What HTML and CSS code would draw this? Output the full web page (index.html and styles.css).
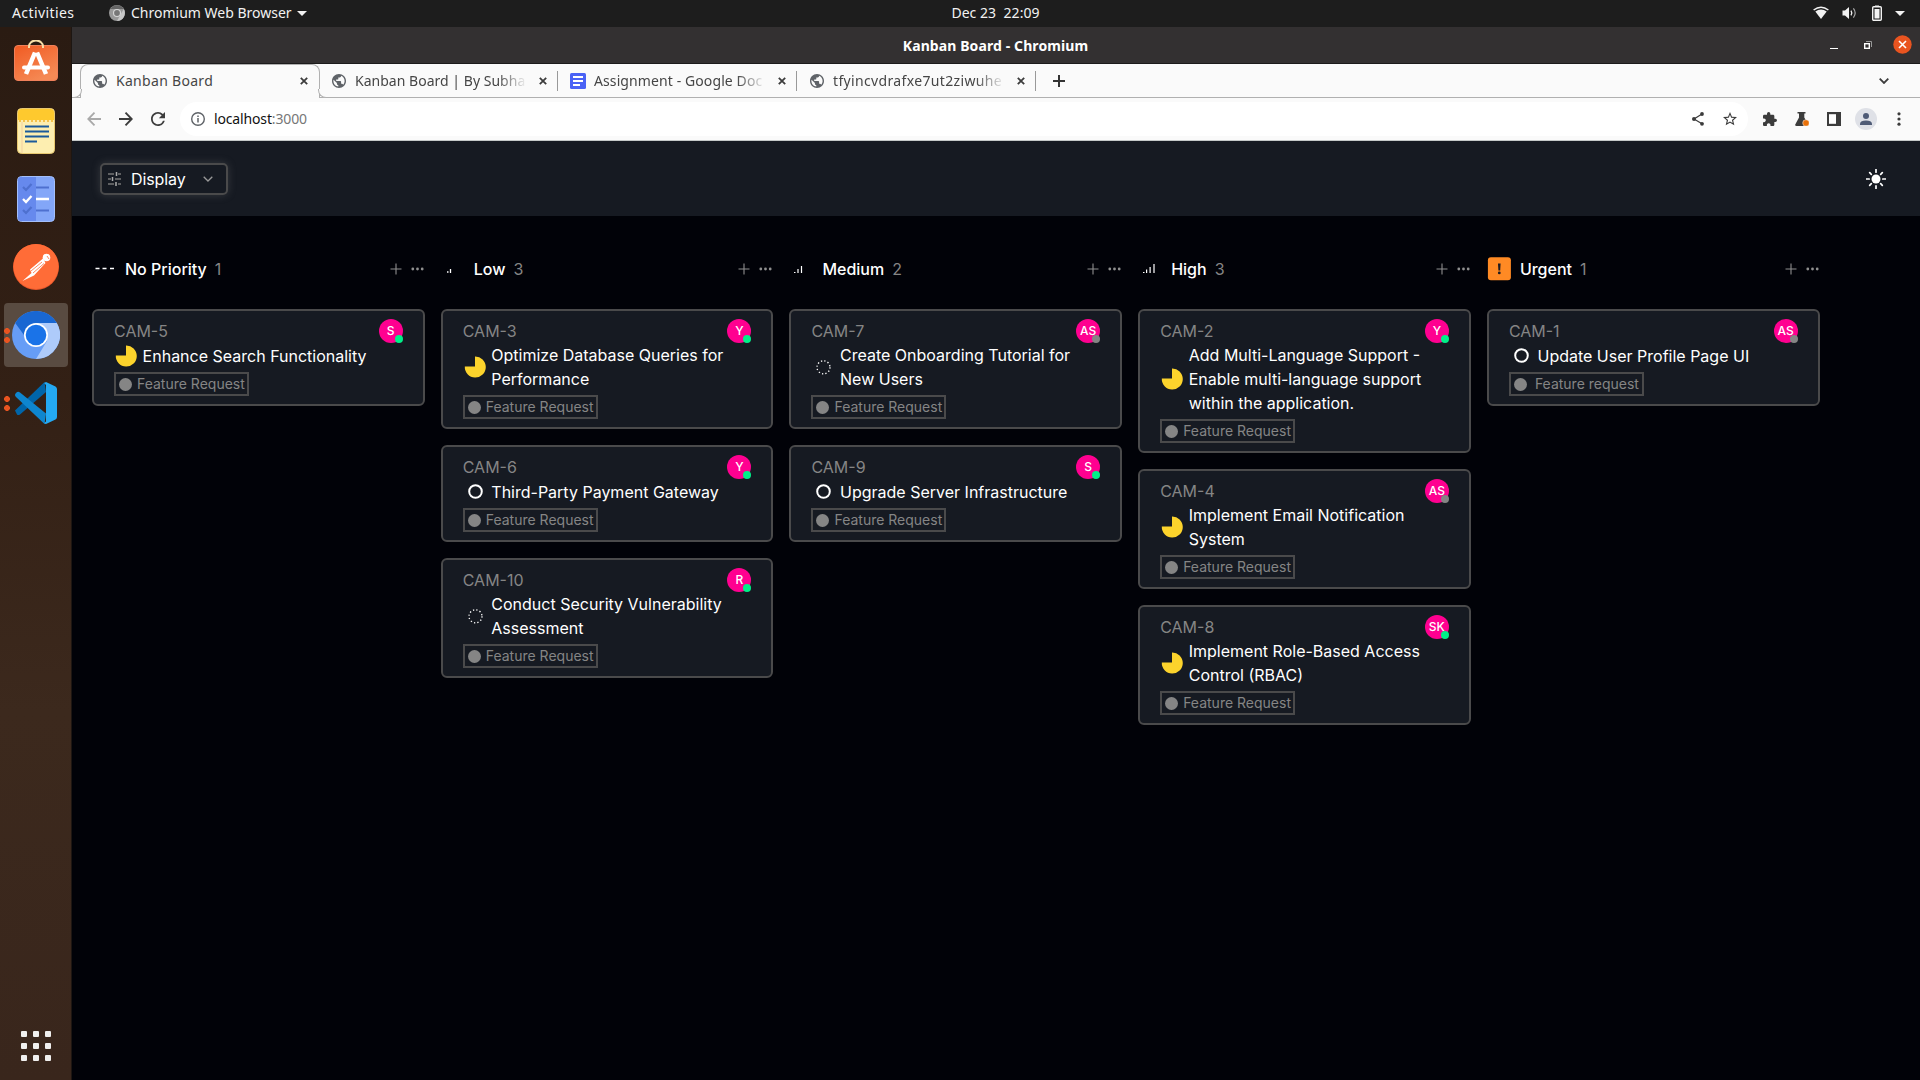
FILE: index.html
```html
<!DOCTYPE html>
<html lang="en">
<head>
<meta charset="utf-8">
<title>Kanban Board</title>
<link rel="stylesheet" href="styles.css">
</head>
<body>
<svg class="defs" aria-hidden="true">
  <symbol id="globe" viewBox="2 2 20 20"><path d="M12 2C6.48 2 2 6.48 2 12s4.48 10 10 10 10-4.48 10-10S17.52 2 12 2zm-1 17.93c-3.95-.49-7-3.85-7-7.93 0-.62.08-1.21.21-1.79L9 15v1c0 1.1.9 2 2 2v1.93zm6.9-2.54c-.26-.81-1-1.39-1.9-1.39h-1v-3c0-.55-.45-1-1-1H8v-2h2c.55 0 1-.45 1-1V7h2c1.1 0 2-.9 2-2v-.41c2.93 1.19 5 4.06 5 7.41 0 2.08-.8 3.97-2.1 5.39z" fill="#5f6368"/></symbol>
  <symbol id="close" viewBox="0 0 8 8"><path d="M.8.8l6.4 6.4M7.2.8L.8 7.2" stroke="#3c3c3c" stroke-width="1.8"/></symbol>
  <symbol id="pie" viewBox="0 0 24 24"><path d="M12 11.500V1.500A10.500 10.500 0 1 1 1.800 11.500z" fill="#fcd32c"/></symbol>
  <symbol id="ring" viewBox="0 0 24 24"><circle cx="12.500" cy="11.500" r="6.300" fill="none" stroke="#fff" stroke-width="2"/></symbol>
  <symbol id="dotted" viewBox="0 0 24 24"><circle cx="12.500" cy="12.300" r="6.500" fill="none" stroke="#fff" stroke-width="1.300" stroke-dasharray="1.300 2.103"/></symbol>
  <symbol id="plus" viewBox="0 0 12 12"><path d="M6 .5v11M.5 6h11" stroke="#909090" stroke-width="1.100"/></symbol>
  <symbol id="more" viewBox="0 0 13 4"><g fill="#909090"><circle cx="1.800" cy="2" r="1.400"/><circle cx="6.500" cy="2" r="1.400"/><circle cx="11.200" cy="2" r="1.400"/></g></symbol>
</svg>

<header class="topbar">
  <div class="topbar-left">
    <span class="activities">Activities</span>
    <svg class="app-icon" viewBox="0 0 16 16"><circle cx="8" cy="8" r="8" fill="#999"/><path d="M1.300 4A8 8 0 0 1 14.800 4H8z" fill="#656565"/><path d="M14.800 4A8 8 0 0 1 8 16l3.300-6z" fill="#c5c5c5"/><circle cx="8" cy="8" r="4" fill="#d7d7d7"/><circle cx="8" cy="8" r="2.900" fill="#777"/></svg>
    <span class="app-name">Chromium Web Browser</span>
    <svg class="caret" viewBox="0 0 10 5"><path d="M0 0h10L5 5z" fill="#f2f2f2"/></svg>
  </div>
  <span class="clock">Dec 23&nbsp; 22:09</span>
  <div class="topbar-right">
    <svg width="16" height="14" viewBox="0 0 16 14"><path d="M.6 4Q8-1.700 15.400 4" fill="none" stroke="#f2f2f2" stroke-width="1.500"/><path d="M2.300 5.600Q8 1.400 13.700 5.600L8 13z" fill="#f2f2f2"/></svg>
    <svg width="16" height="14" viewBox="0 0 16 14"><path d="M.5 4.500H3L7 1v12L3 9.500H.5z" fill="#f2f2f2"/><path d="M9 4.700q1.600 2.300 0 4.600" fill="none" stroke="#f2f2f2" stroke-width="1.300"/><path d="M11.400 2.400q3.600 4.600 0 9.200" fill="none" stroke="#aaa" stroke-width="1.200"/></svg>
    <svg width="10" height="16" viewBox="0 0 10 16"><path d="M3 .5h4v1.500H3z" fill="#f2f2f2"/><rect x=".7" y="1.700" width="8.600" height="13.600" rx="1" fill="none" stroke="#f2f2f2" stroke-width="1.400"/><path d="M2.500 4h5v9.500h-5z" fill="#f2f2f2"/></svg>
    <svg width="10" height="5" viewBox="0 0 10 5"><path d="M0 0h10L5 5z" fill="#f2f2f2"/></svg>
  </div>
</header>

<div class="desktop">
  <nav class="dock">
    <div class="dock-item"><svg width="46" height="46" viewBox="0 0 46 46">
      <defs><linearGradient id="bag" x1="0" y1="0" x2=".6" y2="1"><stop offset="0" stop-color="#f15a22"/><stop offset="1" stop-color="#f58a55"/></linearGradient></defs>
      <rect x="1.500" y="5.500" width="43" height="35" rx="3.500" fill="url(#bag)" stroke="#f0805a"/><path d="M16 8V6.500a7 6 0 0 1 14 0V8" fill="none" stroke="#f8dfa8" stroke-width="2"/>
      <path d="M22 12.500L13 34M24 12.500L33 34" stroke="#fff" stroke-width="4.500"/><path d="M11 27.500h24" stroke="#fff" stroke-width="4" stroke-linecap="round"/></svg></div>
    <div class="dock-item"><svg width="38" height="46" viewBox="0 0 38 46">
      <rect x=".5" y=".5" width="37" height="45" rx="4" fill="#fdeeb0" stroke="#e8c870"/><path d="M1 12V4.500A3.500 3.500 0 0 1 4.500 1h29A3.500 3.500 0 0 1 37 4.500V12z" fill="#fec92e"/><path d="M2 13h34" stroke="#f6c24a" stroke-width="2" stroke-dasharray="2 2"/><path d="M5 14v31" stroke="#f3cfa0"/>
      <path d="M8 18.500h24M8 23.500h24M8 28.500h24M8 33.500h12" stroke="#1b5a9b" stroke-width="2"/></svg></div>
    <div class="dock-item"><svg width="38" height="46" viewBox="0 0 38 46">
      <rect x=".5" y=".5" width="37" height="45" rx="4" fill="#83a6f8" stroke="#a3bffb"/><path d="M19 1v44H4a3 3 0 0 1-3-3V4a3 3 0 0 1 3-3z" fill="#6689ed"/>
      <g fill="none" stroke="#4e70cf" stroke-width="2.200"><path d="M6 11l3 3 5.500-6M19 11.500h13M6 34l3 3 5.500-6M19 34.500h13"/></g><path d="M6 23l3 3 5.500-6M19 23h13" fill="none" stroke="#fff" stroke-width="2.300"/></svg></div>
    <div class="dock-item"><svg width="46" height="46" viewBox="0 0 46 46"><circle cx="23" cy="23" r="23" fill="#e9572b"/><circle cx="23" cy="22.500" r="22.500" fill="#ff6c37"/>
      <circle cx="33.500" cy="13.500" r="3.800" fill="#fff"/><path d="M30 14.500L17 25.500 18.500 29 9.500 37 21 31.500 32.500 19z" fill="#fff"/><path d="M18 27l11-9M20 29l11-9.500M34 12l2 3" stroke="#ff6c37" stroke-width=".8"/></svg></div>
    <div class="dock-item running"><div class="dock-focus"><svg width="48" height="48" viewBox="0 0 48 48"><circle cx="24" cy="24" r="24" fill="#669df6"/><path d="M3.200 12A24 24 0 0 1 44.800 12L35 24H12z" fill="#1967d2"/><path d="M24 12h20.800A24 24 0 0 1 24 48l11-18z" fill="#aecbfa"/><circle cx="24" cy="24" r="12" fill="#fff"/><circle cx="24" cy="24" r="10.300" fill="#1a73e8"/></svg></div><span class="dots"></span></div>
    <div class="dock-item running"><svg width="42" height="42" viewBox="0 0 42 42"><path d="M0 28.500L29.500 0 31 10 5 32.500q-2 1-3 0z" fill="#0065a9"/><path d="M1.500 10.500q1.500-1.500 3.500 0L31 31.500 29.500 42 1 15q-2-2 0-4z" fill="#0e86cf"/><path d="M31 0l9.500 4.500q1.500 1 1.500 2.500v28q0 1.500-1.500 2.500L31 42q-1.500 0-2-1l2-1.500V3l-2-2z" fill="#24a9f2"/></svg><span class="dots"></span></div>
    <div class="app-grid"><i></i><i></i><i></i><i></i><i></i><i></i><i></i><i></i><i></i></div>
  </nav>

  <div class="window">
    <div class="titlebar">
      <span class="window-title">Kanban Board - Chromium</span>
      <div class="window-controls">
        <svg width="8" height="8" viewBox="0 0 8 8"><path d="M0 7.500h8" stroke="#fff"/></svg>
        <svg width="8" height="8" viewBox="0 0 8 8"><path d="M2 .5h5.500V6" fill="none" stroke="#999"/><rect x=".7" y="2.700" width="4.600" height="4.600" fill="none" stroke="#fff" stroke-width="1.400"/></svg>
        <svg width="19" height="19" viewBox="0 0 19 19"><circle cx="9.500" cy="9.500" r="9.200" fill="#e95420"/><path d="M6 6l7 7M13 6l-7 7" stroke="#fff" stroke-width="1.600"/></svg>
      </div>
    </div>

    <div class="tabstrip">
      <div class="tab active"><svg class="favicon"><use href="#globe"/></svg><span class="tab-title">Kanban Board</span><svg class="tab-close"><use href="#close"/></svg></div>
      <div class="tab rest"><svg class="favicon"><use href="#globe"/></svg><span class="tab-title fade t2">Kanban Board | By Subha</span><svg class="tab-close"><use href="#close"/></svg></div>
      <div class="tab rest"><svg class="favicon doc" viewBox="0 0 16 16"><rect width="16" height="16" rx="1.500" fill="#4a62f5"/><path d="M3 4h10M3 8h10M3 12h7" stroke="#fff" stroke-width="1.800"/></svg><span class="tab-title fade t3">Assignment - Google Doc</span><svg class="tab-close"><use href="#close"/></svg></div>
      <div class="tab rest"><svg class="favicon"><use href="#globe"/></svg><span class="tab-title fade t4">tfyincvdrafxe7ut2ziwuhe</span><svg class="tab-close"><use href="#close"/></svg></div>
      <div class="tab-tail">
        <svg width="12" height="12" viewBox="0 0 12 12"><path d="M6 0v12M0 6h12" stroke="#333" stroke-width="2"/></svg>
        <svg width="10" height="6" viewBox="0 0 10 6"><path d="M.7.700L5 5 9.300.7" fill="none" stroke="#3c3c3c" stroke-width="1.800"/></svg>
      </div>
    </div>

    <div class="toolbar">
      <div class="nav-buttons">
        <svg width="14" height="14" viewBox="0 0 14 14"><path d="M14 7H1.500M7.500.7L1.300 7l6.200 6.300" fill="none" stroke="#a9a9a9" stroke-width="1.800"/></svg>
        <svg width="14" height="14" viewBox="0 0 14 14"><path d="M0 7h12.500M6.500.7L12.700 7l-6.200 6.300" fill="none" stroke="#3c3c3c" stroke-width="1.900"/></svg>
        <svg width="14" height="14" viewBox="4 4 16 16"><path d="M17.650 6.350A7.958 7.958 0 0 0 12 4c-4.420 0-7.990 3.580-7.990 8s3.570 8 7.990 8c3.730 0 6.840-2.550 7.730-6h-2.080A5.990 5.990 0 0 1 12 18c-3.310 0-6-2.690-6-6s2.690-6 6-6c1.660 0 3.140.69 4.220 1.780L13 11h7V4l-2.350 2.350z" fill="#3c3c3c"/></svg>
      </div>
      <div class="omnibox">
        <svg width="14" height="14" viewBox="0 0 14 14"><circle cx="7" cy="7" r="6.300" fill="none" stroke="#5f6368" stroke-width="1.400"/><path d="M7 6v4.500M7 3.400V5" stroke="#5f6368" stroke-width="1.500"/></svg>
        <span class="url">localhost<span>:3000</span></span>
        <svg class="share" width="12" height="14" viewBox="0 0 12 14"><g fill="#3c3c3c"><circle cx="10" cy="2" r="1.900"/><circle cx="2" cy="7" r="2"/><circle cx="10" cy="11.800" r="1.900"/></g><path d="M10 2L2 7l8 4.800" fill="none" stroke="#3c3c3c" stroke-width="1.200"/></svg>
        <svg width="14" height="14" viewBox="2 2 20 20"><path d="M22 9.240l-7.190-.62L12 2 9.190 8.630 2 9.240l5.460 4.730L5.820 21 12 17.270 18.180 21l-1.630-7.030L22 9.240zM12 15.400l-3.760 2.270 1-4.280-3.320-2.880 4.380-.38L12 6.100l1.710 4.040 4.380.38-3.320 2.880 1 4.280L12 15.400z" fill="#3c3c3c"/></svg>
      </div>
      <div class="tool-actions">
        <svg width="14" height="14" viewBox="2 1 21 21"><path d="M20.500 11H19V7c0-1.100-.9-2-2-2h-4V3.500a2.500 2.500 0 0 0-5 0V5H4c-1.100 0-1.990.9-1.990 2v3.800H3.500c1.490 0 2.700 1.210 2.700 2.700s-1.210 2.700-2.700 2.700H2V20c0 1.100.9 2 2 2h3.800v-1.500c0-1.490 1.210-2.700 2.700-2.700s2.700 1.210 2.700 2.700V22H17c1.100 0 2-.9 2-2v-4h1.500a2.500 2.500 0 0 0 0-5z" fill="#3c3c3c"/></svg>
        <svg width="14" height="14" viewBox="0 0 14 14"><path d="M2.500 0h8v1.500H9.300v4L13 12q.5 2-1.500 2h-10Q-.5 14 .5 12L4 5.500v-4H2.500z" fill="#3c3c3c"/><circle cx="11" cy="11" r="3.300" fill="#e8710a" stroke="#fafafa" stroke-width=".5"/></svg>
        <svg width="14" height="14" viewBox="0 0 14 14"><path d="M0 0h14v14H0z" fill="#3c3c3c"/><path d="M2 2.200h7v9.600H2z" fill="#fff"/></svg>
        <svg class="profile" width="22" height="22" viewBox="0 0 22 22"><circle cx="11" cy="11" r="11" fill="#dfe1e7"/><circle cx="11" cy="7.900" r="3" fill="#4f5b76"/><path d="M5 17v-1.500Q5.500 12.400 11 12.400T17 15.500V17z" fill="#4f5b76"/></svg>
        <svg width="4" height="14" viewBox="0 0 4 14"><g fill="#3c3c3c"><circle cx="2" cy="1.800" r="1.600"/><circle cx="2" cy="7" r="1.600"/><circle cx="2" cy="12.200" r="1.600"/></g></svg>
      </div>
    </div>

    <main class="page">
      <div class="page-header">
        <button class="display-button">
          <svg width="13" height="14" viewBox="0 0 13 14"><path d="M0 2h6M10 2h3M0 7h3M7 7h6M0 12h6M10 12h3" stroke="#777" stroke-width="1.300"/><path d="M8.500 0v4M4.500 5v4M8 10v4" stroke="#aaa" stroke-width="1.500"/></svg>
          <span>Display</span>
          <svg width="10" height="6" viewBox="0 0 10 6"><path d="M.7.700L5 5 9.300.7" fill="none" stroke="#999" stroke-width="1.300"/></svg>
        </button>
        <svg class="sun" width="20" height="20" viewBox="0 0 20 20"><circle cx="10" cy="10" r="4.500" fill="#fff"/><path d="M10 .5v2.700M10 16.800v2.700M.5 10h2.700M16.800 10h2.700M3.700 3.700l1.600 1.600M14.700 14.700l1.600 1.600M3.700 16.300l1.600-1.600M14.700 5.300l1.600-1.600" stroke="#fff" stroke-width="1.700" stroke-linecap="round"/></svg>
      </div>

      <div class="board">
        <section class="column">
          <div class="column-head"><svg class="level" viewBox="0 0 24 24"><path d="M3.500 11.500h4M10.500 11.500h4M18 11.500h4" stroke="#fff" stroke-width="1.400"/></svg><h2>No Priority</h2><span class="count">1</span><svg class="add"><use href="#plus"/></svg><svg class="menu"><use href="#more"/></svg></div>
          <article class="card"><div class="card-top"><span class="id">CAM-5</span><span class="avatar">S<i class="on"></i></span></div><div class="card-title"><svg><use href="#pie"/></svg><p>Enhance Search Functionality</p></div><div class="tag"><i></i><span>Feature Request</span></div></article>
        </section>
        <section class="column">
          <div class="column-head"><svg class="level" viewBox="0 0 24 24"><path d="M6 15h1.500M9.500 12v4" stroke="#fff" stroke-width="1.300"/></svg><h2>Low</h2><span class="count">3</span><svg class="add"><use href="#plus"/></svg><svg class="menu"><use href="#more"/></svg></div>
          <article class="card"><div class="card-top"><span class="id">CAM-3</span><span class="avatar">Y<i class="on"></i></span></div><div class="card-title"><svg><use href="#pie"/></svg><p>Optimize Database Queries for Performance</p></div><div class="tag"><i></i><span>Feature Request</span></div></article>
          <article class="card"><div class="card-top"><span class="id">CAM-6</span><span class="avatar">Y<i class="on"></i></span></div><div class="card-title"><svg><use href="#ring"/></svg><p>Third-Party Payment Gateway</p></div><div class="tag"><i></i><span>Feature Request</span></div></article>
          <article class="card"><div class="card-top"><span class="id">CAM-10</span><span class="avatar">R<i class="on"></i></span></div><div class="card-title"><svg><use href="#dotted"/></svg><p>Conduct Security Vulnerability Assessment</p></div><div class="tag"><i></i><span>Feature Request</span></div></article>
        </section>
        <section class="column">
          <div class="column-head"><svg class="level" viewBox="0 0 24 24"><path d="M5 15.500H6.500M9 12v4M12.500 9v7" stroke="#fff" stroke-width="1.200"/></svg><h2>Medium</h2><span class="count">2</span><svg class="add"><use href="#plus"/></svg><svg class="menu"><use href="#more"/></svg></div>
          <article class="card"><div class="card-top"><span class="id">CAM-7</span><span class="avatar">AS<i></i></span></div><div class="card-title"><svg><use href="#dotted"/></svg><p>Create Onboarding Tutorial for New Users</p></div><div class="tag"><i></i><span>Feature Request</span></div></article>
          <article class="card"><div class="card-top"><span class="id">CAM-9</span><span class="avatar">S<i class="on"></i></span></div><div class="card-title"><svg><use href="#ring"/></svg><p>Upgrade Server Infrastructure</p></div><div class="tag"><i></i><span>Feature Request</span></div></article>
        </section>
        <section class="column">
          <div class="column-head"><svg class="level" viewBox="0 0 24 24"><path d="M5 15.500H6.500M8.600 12.500V16M12.100 10v6M16 7v9" stroke="#fff" stroke-width="1.200"/></svg><h2>High</h2><span class="count">3</span><svg class="add"><use href="#plus"/></svg><svg class="menu"><use href="#more"/></svg></div>
          <article class="card"><div class="card-top"><span class="id">CAM-2</span><span class="avatar">Y<i class="on"></i></span></div><div class="card-title"><svg><use href="#pie"/></svg><p>Add Multi-Language Support - Enable multi-language support within the application.</p></div><div class="tag"><i></i><span>Feature Request</span></div></article>
          <article class="card"><div class="card-top"><span class="id">CAM-4</span><span class="avatar">AS<i></i></span></div><div class="card-title"><svg><use href="#pie"/></svg><p>Implement Email Notification System</p></div><div class="tag"><i></i><span>Feature Request</span></div></article>
          <article class="card"><div class="card-top"><span class="id">CAM-8</span><span class="avatar">SK<i class="on"></i></span></div><div class="card-title"><svg><use href="#pie"/></svg><p>Implement Role-Based Access Control (RBAC)</p></div><div class="tag"><i></i><span>Feature Request</span></div></article>
        </section>
        <section class="column">
          <div class="column-head"><svg class="level" viewBox="0 0 24 24"><rect x=".9" y=".3" width="23" height="23" rx="3" fill="#ff8a24"/><path d="M11 6.500h2.600l-.4 7h-1.800z" fill="#1b1b22"/><circle cx="12.300" cy="15.900" r="1.400" fill="#1b1b22"/></svg><h2>Urgent</h2><span class="count">1</span><svg class="add"><use href="#plus"/></svg><svg class="menu"><use href="#more"/></svg></div>
          <article class="card"><div class="card-top"><span class="id">CAM-1</span><span class="avatar">AS<i></i></span></div><div class="card-title"><svg><use href="#ring"/></svg><p>Update User Profile Page UI</p></div><div class="tag spaced"><i></i><span>Feature request</span></div></article>
        </section>
      </div>
    </main>
  </div>
</div>
</body>
</html>
```
FILE: styles.css
```css
* { box-sizing: border-box; }
body {
  margin: 0;
  height: 1080px;
  overflow: hidden;
  display: flex;
  flex-direction: column;
  background: #010208;
  font-family: "Noto Sans", "Open Sans", sans-serif;
}
svg { display: block; flex: none; }
.defs { position: absolute; width: 0; height: 0; }

/* Desktop top bar */
.topbar {
  height: 27px;
  flex: none;
  display: grid;
  grid-template-columns: 1fr auto 1fr;
  align-items: center;
  padding: 0 15px 1px 12px;
  background: #1d1d1d;
  color: #f2f2f2;
  font-size: 14px;
  line-height: 26px;
}
.topbar-left, .topbar-right { display: flex; align-items: center; }
.activities { width: 97px; letter-spacing: .4px; }
.app-icon { width: 16px; height: 16px; margin-right: 6px; }
.app-name { letter-spacing: 0; }
.caret { width: 10px; height: 5px; margin-left: 5px; }
.clock { font-size: 14px; letter-spacing: .05px; margin: 0 -37px 0 37px; }
.topbar-right { justify-content: flex-end; }
.topbar-right svg:nth-child(2) { margin-left: 13px; }
.topbar-right svg:nth-child(3) { margin-left: 14px; }
.topbar-right svg:nth-child(4) { margin-left: 13px; }

.desktop { flex: 1; display: flex; min-height: 0; }

/* Dock */
.dock {
  width: 72px;
  flex: none;
  display: flex;
  flex-direction: column;
  padding-top: 2px;
  border-right: 1px solid #1d1612;
  background: linear-gradient(#2a1b12, #332015 35%, #3c291d 65%, #39261c);
}
.dock-item { position: relative; height: 68px; display: flex; align-items: center; justify-content: center; }
.dock-focus { width: 64px; height: 64px; border-radius: 4px; background: #594b41; display: flex; align-items: center; justify-content: center; }
.dots { position: absolute; left: 4px; top: 27px; width: 6px; height: 15px; background: radial-gradient(circle at 3px 3px, #e95420 2.6px, transparent 3.2px), radial-gradient(circle at 3px 12px, #e95420 2.6px, transparent 3.2px); }
.app-grid { display: grid; grid-template-columns: repeat(3, 6px); gap: 6px; margin: auto auto 19px 21px; }
.app-grid i { width: 6px; height: 6px; border-radius: 1px; background: #f0efee; }

/* Browser window */
.window { flex: 1; min-width: 0; display: flex; flex-direction: column; }
.titlebar {
  height: 37px;
  flex: none;
  display: grid;
  grid-template-columns: 1fr auto 1fr;
  align-items: center;
  padding: 0 8px 0 0;
  background: #333031;
  border-bottom: 1px solid #1c1b1b;
  color: #fff;
}
.window-title { grid-column: 2; font-size: 14px; font-weight: 700; letter-spacing: .1px; padding-left: 7px; }
.window-controls { display: flex; justify-content: flex-end; align-items: center; padding-bottom: 1px; }
.window-controls svg:nth-child(2) { margin-left: 26px; }
.window-controls svg:nth-child(3) { margin-left: 21px; }

.tabstrip { height: 34px; flex: none; display: flex; padding-left: 8px; background: linear-gradient(#b0b0b0, #b0b0b0) bottom / 100% 1px no-repeat #fafafa; }
.tab { position: relative; width: 239px; display: flex; align-items: center; padding-left: 12px; color: #464646; font-size: 14px; }
.tab.active { background: #fafafa; border: 1px solid #b0b0b0; border-bottom: 0; border-radius: 8px 8px 0 0; padding: 0 0 1px 12px; width: 240px; }
.tab.active::before, .tab.active::after { content: ""; position: absolute; bottom: 0; width: 8px; height: 8px; border: 1px solid #b0b0b0; border-top: 0; background: #fafafa; }
.tab.active::before { left: -8px; border-left: 0; border-bottom-right-radius: 8px; }
.tab.active::after { right: -8px; border-right: 0; border-bottom-left-radius: 8px; }
.rest { padding-left: 11px; }
.rest::after { content: ""; position: absolute; right: 1px; top: 7px; width: 1px; height: 20px; background: #999; }
.rest .favicon { margin-left: 1px; }
.favicon { width: 14px; height: 14px; margin: 0 9px 0 0; }
.rest .favicon.doc { width: 16px; height: 16px; margin: 0 8px 0 0; }
.tab-title { width: 174px; overflow: hidden; white-space: nowrap; line-height: 32px; letter-spacing: .3px; }
.tab-close { width: 8px; height: 8px; margin-left: 10px; }
.fade { -webkit-mask-image: linear-gradient(90deg, #000 82%, transparent 99%); mask-image: linear-gradient(90deg, #000 82%, transparent 99%); }
.t2 { letter-spacing: .02px; }
.t3 { letter-spacing: .1px; }
.t4 { letter-spacing: .35px; }
.tab-tail { flex: 1; display: flex; align-items: center; justify-content: space-between; padding: 0 31px 0 16px; }

.toolbar { height: 43px; flex: none; display: flex; align-items: center; padding: 0 19px 1px 15px; background: #fafafa; border-bottom: 1px solid #c5c9c9; }
.nav-buttons { display: flex; gap: 18px; margin-right: 15px; }
.omnibox { flex: 1; height: 34px; border-radius: 17px; background: #fff; display: flex; align-items: center; padding: 0 11px; }
.url { margin-left: 9px; font-size: 14px; color: #111; letter-spacing: -.15px; }
.url span { color: #777; }
.share { margin: 0 19px 0 auto; }
.tool-actions { display: flex; align-items: center; gap: 18px; margin-left: 15px; }
.profile { margin: 0 2px 0 -4px; }

/* Application */
.page { flex: 1; display: flex; flex-direction: column; background: #010208; color: #fff; font-family: Inter, sans-serif; }
.page-header { height: 75px; flex: none; display: flex; align-items: center; justify-content: space-between; padding: 1px 34px 0 28px; background: #161a22; }
.display-button { width: 128px; height: 32px; display: flex; align-items: center; padding: 0 13px 0 6px; border: 2px solid #4a4a4b; border-radius: 5px; background: #161a22; box-shadow: 0 0 8px rgba(130, 130, 130, .3); color: #fff; font: 400 16px/24px Inter, sans-serif; }
.display-button span { margin-left: 10px; letter-spacing: -.1px; }
.display-button svg:last-child { margin-left: auto; }

.board { display: flex; gap: 16px; padding: 41px 100px 0 20px; align-items: flex-start; }
.column { width: 332.72px; flex: none; display: flex; flex-direction: column; gap: 16px; }
.column-head { height: 24px; display: flex; align-items: center; margin-bottom: 12px; }
.level { width: 24px; height: 24px; }
h2 { margin: 0 0 0 9px; font-size: 16px; line-height: 24px; font-weight: 500; }
.count { margin-left: 8px; font-size: 16px; color: #858585; }
.add { width: 12px; height: 12px; margin-left: auto; }
.menu { width: 13px; height: 4px; margin: 0 1px 0 9px; }

.card { padding: 8px 20px; border: 2px solid #4a4a4b; border-radius: 6px; background: #161a22; }
.card-top { height: 24px; display: flex; justify-content: space-between; align-items: center; }
.id { font-size: 16px; line-height: 24px; color: #858585; }
.avatar { position: relative; width: 24px; height: 24px; border-radius: 50%; background: #ff0090; font-size: 12px; font-weight: 500; line-height: 24px; text-align: center; }
.avatar i { position: absolute; right: 0; bottom: 0; width: 8px; height: 8px; border-radius: 50%; background: #858585; }
.avatar .on { background: #00f088; }
.card-title { min-height: 25px; display: flex; align-items: center; gap: 4.6px; }
.card-title svg { width: 24px; height: 24px; }
.card-title p { margin: 0; font-size: 16px; line-height: 24px; }
.tag { width: 135px; height: 24px; margin-top: 4px; border: 2px solid #4a4a4b; display: flex; align-items: center; padding-left: 3px; color: #858585; font-size: 14px; line-height: 20px; }
.tag i { width: 13px; height: 13px; flex: none; border-radius: 50%; background: #858585; }
.tag span { margin-left: 5px; white-space: nowrap; }
.tag.spaced span { margin-left: 8px; }
```
